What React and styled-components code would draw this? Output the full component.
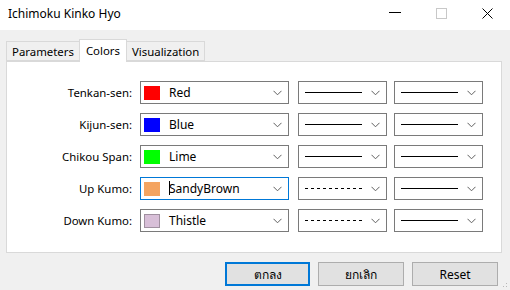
import React from "react";
import styled, { createGlobalStyle } from "styled-components";

const Global = createGlobalStyle`
  html, body { margin: 0; padding: 0; background: #f0f0f0; }
  body { font-family: "Noto Sans", "Open Sans", "DejaVu Sans", sans-serif; font-size: 11.4px; color: #000; }
`;

const Window = styled.div`
  width: 510px;
  height: 290px;
  background: #f0f0f0;
  display: flex;
  flex-direction: column;
  position: relative;
  overflow: hidden;
`;

const TitleBar = styled.div`
  height: 30px;
  background: #fff;
  display: flex;
  align-items: center;
  padding-left: 8px;
`;

const Title = styled.div`
  flex: 1;
  font-size: 12px;
  line-height: 1;
  margin-top: -2px;
`;

const Controls = styled.div`
  display: flex;
  height: 100%;
`;

const CtrlBtn = styled.div`
  width: 46px;
  height: 100%;
  display: flex;
  align-items: center;
  justify-content: center;
  margin-top: -2px;
`;

const Content = styled.div`
  padding: 9px 8px 0 6px;
  display: flex;
  flex-direction: column;
`;

const TabStrip = styled.div`
  display: flex;
  align-items: flex-end;
  height: 22px;
  position: relative;
  z-index: 1;
`;

const Tab = styled.div`
  box-sizing: border-box;
  height: ${(p) => (p.$active ? "23px" : "20px")};
  margin-bottom: ${(p) => (p.$active ? "-1px" : "0")};
  padding: ${(p) => (p.$active ? "0 6px 2px" : "0 5px 0")};
  display: flex;
  align-items: center;
  background: ${(p) => (p.$active ? "#fff" : "#f0f0f0")};
  border: 1px solid #d9d9d9;
  border-bottom: ${(p) => (p.$active ? "none" : "1px solid #d9d9d9")};
  margin-left: ${(p) => (p.$first ? "0" : "-1px")};
`;

const Panel = styled.div`
  box-sizing: border-box;
  width: 496px;
  height: 192px;
  background: #fff;
  border: 1px solid #d9d9d9;
  padding-top: 19px;
  display: flex;
  flex-direction: column;
  gap: 9px;
`;

const Row = styled.div`
  display: flex;
  align-items: center;
  height: 23px;
`;

const Label = styled.div`
  width: 125px;
  text-align: right;
  padding-right: 8px;
`;

const Combo = styled.div`
  box-sizing: border-box;
  width: ${(p) => p.$w}px;
  height: 23px;
  margin-right: ${(p) => p.$mr || 0}px;
  border: 1px solid ${(p) => (p.$focus ? "#0078d7" : "#7a7a7a")};
  background: #fff;
  display: flex;
  align-items: center;
  padding-left: 3px;
  padding-right: 6px;
  svg { flex-shrink: 0; }
`;

const Swatch = styled.div`
  box-sizing: border-box;
  width: 16px;
  height: 14px;
  background: ${(p) => p.$c};
  border: 1px solid ${(p) => p.$b || p.$c};
  margin-right: 9px;
`;

const ComboText = styled.div`
  flex: 1;
  font-size: 12px;
  position: relative;
`;

const Caret = styled.span`
  position: absolute;
  left: 0;
  top: 1px;
  width: 1px;
  height: 14px;
  background: #000;
`;

const LineBox = styled.div`
  flex: 1;
  display: flex;
  align-items: center;
  padding-left: 3px;
`;

const Line = styled.div`
  width: 57px;
  height: 1px;
  background: #000;
`;

const DashLine = styled.div`
  width: 57px;
  height: 1px;
  background: repeating-linear-gradient(90deg, #000 0 3px, transparent 3px 6px);
`;

const Buttons = styled.div`
  display: flex;
  justify-content: flex-end;
  gap: 8px;
  margin-top: 9px;
  padding-right: 4px;
`;

const Button = styled.div`
  box-sizing: border-box;
  width: ${(p) => p.$w || 86}px;
  height: 24px;
  background: #e1e1e1;
  border: ${(p) => (p.$default ? "2px solid #0078d7" : "1px solid #adadad")};
  display: flex;
  align-items: center;
  justify-content: center;
  font-size: 12px;
`;

const Grip = styled.div`
  position: absolute;
  right: 1px;
  bottom: 1px;
  width: 10px;
  height: 10px;
  background-image: radial-gradient(circle, #b8b8b8 0.8px, transparent 1px);
  background-size: 3px 3px;
  clip-path: polygon(100% 0, 100% 100%, 0 100%);
`;

const Chevron = () => (
  <svg width="9" height="6" viewBox="0 0 9 6">
    <path d="M0.5 0.8 L4.5 4.8 L8.5 0.8" fill="none" stroke="#606060" strokeWidth="1" />
  </svg>
);

const rows = [
  { label: "Tenkan-sen:", color: "#ff0000", name: "Red", dashed: false },
  { label: "Kijun-sen:", color: "#0000ff", name: "Blue", dashed: false },
  { label: "Chikou Span:", color: "#00ff00", name: "Lime", dashed: false },
  { label: "Up Kumo:", color: "#f4a460", name: "SandyBrown", dashed: true, focus: true },
  { label: "Down Kumo:", color: "#d8bfd8", name: "Thistle", dashed: true, border: "#a090a0" },
];

export default function App() {
  return (
    <Window>
      <Global />
      <TitleBar>
        <Title>Ichimoku Kinko Hyo</Title>
        <Controls>
          <CtrlBtn>
            <svg width="12" height="2" viewBox="0 0 12 2">
              <rect x="0" y="0" width="12" height="1" fill="#000" />
            </svg>
          </CtrlBtn>
          <CtrlBtn>
            <svg width="11" height="11" viewBox="0 0 11 11">
              <rect x="0.5" y="0.5" width="10" height="10" fill="none" stroke="#c8c8c8" />
            </svg>
          </CtrlBtn>
          <CtrlBtn>
            <svg width="11" height="11" viewBox="0 0 11 11">
              <path d="M0.5 0.5 L10.5 10.5 M10.5 0.5 L0.5 10.5" stroke="#000" strokeWidth="1" />
            </svg>
          </CtrlBtn>
        </Controls>
      </TitleBar>
      <Content>
        <TabStrip>
          <Tab $first>Parameters</Tab>
          <Tab $active>Colors</Tab>
          <Tab>Visualization</Tab>
        </TabStrip>
        <Panel>
          {rows.map((r) => (
            <Row key={r.label}>
              <Label>{r.label}</Label>
              <Combo $w={149} $mr={9} $focus={r.focus}>
                <Swatch $c={r.color} $b={r.border} />
                <ComboText>
                  {r.focus && <Caret />}
                  {r.name}
                </ComboText>
                <Chevron />
              </Combo>
              <Combo $w={89} $mr={7}>
                <LineBox>{r.dashed ? <DashLine /> : <Line />}</LineBox>
                <Chevron />
              </Combo>
              <Combo $w={89}>
                <LineBox>
                  <Line />
                </LineBox>
                <Chevron />
              </Combo>
            </Row>
          ))}
        </Panel>
        <Buttons>
          <Button $default $w={85}>ตกลง</Button>
          <Button $w={86}>ยกเลิก</Button>
          <Button $w={86}>Reset</Button>
        </Buttons>
      </Content>
      <Grip />
    </Window>
  );
}
